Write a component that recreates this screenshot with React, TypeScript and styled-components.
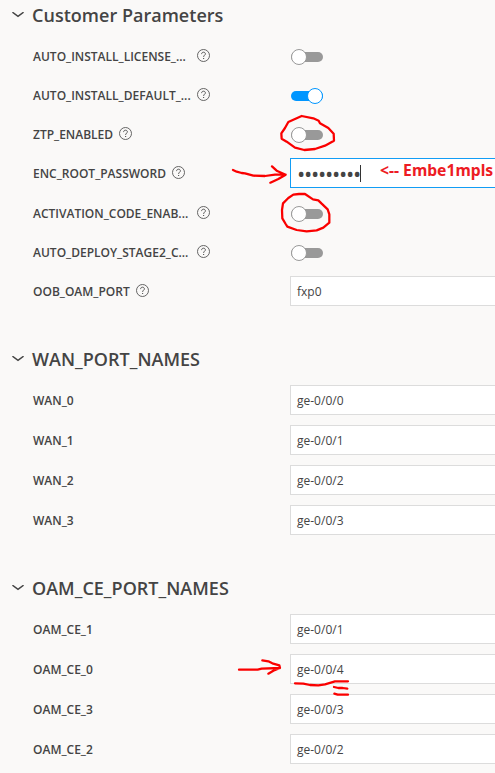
import React from "react";
import styled, { createGlobalStyle } from "styled-components";

const GlobalStyle = createGlobalStyle`
  *, *::before, *::after { box-sizing: border-box; }
  body {
    margin: 0;
    background: #faf9f8;
    color: #444;
    font-family: "Open Sans", "Noto Sans", sans-serif;
    overflow: hidden;
  }
`;

const Page = styled.main`
  position: relative;
  width: 495px;
  height: 773px;
  overflow: hidden;
  background: #faf9f8;
`;

const Section = styled.section<{ $gap: number }>`
  margin-bottom: ${(p) => p.$gap}px;
`;

const SectionHeader = styled.header<{ $height: number }>`
  display: flex;
  align-items: flex-start;
  height: ${(p) => p.$height}px;
  padding-left: 12px;
`;

const Chevron = styled.svg`
  flex: none;
  width: 12px;
  height: 6px;
  margin: 12px 8px 0 0;
`;

const Title = styled.h2`
  margin: 0;
  font-size: 18px;
  line-height: 30px;
  font-weight: 600;
  letter-spacing: 0.02px;
  white-space: nowrap;
`;

const Row = styled.div<{ $tall: boolean }>`
  display: grid;
  grid-template-columns: 257px 1fr;
  align-items: start;
  height: ${(p) => (p.$tall ? 40 : 39)}px;
  padding-left: 33px;
`;

const LabelCell = styled.div`
  display: flex;
  gap: 6px;
`;

const Label = styled.span<{ $width?: number }>`
  width: ${(p) => (p.$width ? `${p.$width}px` : "auto")};
  font-size: 12px;
  line-height: 32px;
  font-weight: 600;
  white-space: nowrap;
`;

const HelpIcon = styled.svg`
  flex: none;
  width: 13px;
  height: 13px;
  margin-top: 8px;
`;

const Field = styled.div<{ $focused?: boolean }>`
  display: flex;
  align-items: center;
  height: 30px;
  margin-right: -10px;
  padding-left: 6px;
  border: 1px solid ${(p) => (p.$focused ? "#129df5" : "#dcdcdc")};
  background: #fff;
  font-size: 12px;
  white-space: nowrap;
`;

const Dots = styled.span`
  width: 63px;
  font-size: 22px;
  line-height: 28px;
  letter-spacing: -1.27px;
`;

const Caret = styled.span`
  width: 1px;
  height: 17px;
  background: #333;
`;

const Note = styled.span`
  margin: -7px 0 0 19px;
  color: #ed1c24;
  font-family: "Noto Sans", "Open Sans", sans-serif;
  font-size: 15.7px;
  font-weight: 700;
`;

const Switch = styled.div<{ $on: boolean }>`
  display: flex;
  align-items: center;
  justify-content: ${(p) => (p.$on ? "flex-end" : "flex-start")};
  width: 32px;
  height: 10px;
  margin: 11px 0 0 1px;
  border-radius: 5px;
  background: ${(p) => (p.$on ? "#0096ff" : "#999")};
`;

const Knob = styled.span<{ $on: boolean }>`
  flex: none;
  width: 16px;
  height: 16px;
  border: 1px solid ${(p) => (p.$on ? "#0096ff" : "#999")};
  border-radius: 50%;
  background: #fff;
`;

const Markup = styled.svg`
  position: absolute;
  inset: 0;
  width: 495px;
  height: 773px;
  pointer-events: none;
`;

type Param = {
  name: string;
  help?: boolean;
  cut?: boolean;
  on?: boolean;
  value?: string;
  password?: boolean;
};

type Group = { title: string; header: number; gap: number; params: Param[] };

const groups: Group[] = [
  {
    title: "Customer Parameters",
    header: 41,
    gap: 28,
    params: [
      { name: "AUTO_INSTALL_LICENSE_...", help: true, cut: true, on: false },
      { name: "AUTO_INSTALL_DEFAULT_...", help: true, cut: true, on: true },
      { name: "ZTP_ENABLED", help: true, on: false },
      { name: "ENC_ROOT_PASSWORD", help: true, password: true, value: "•••••••••" },
      { name: "ACTIVATION_CODE_ENAB...", help: true, cut: true, on: false },
      { name: "AUTO_DEPLOY_STAGE2_C...", help: true, cut: true, on: false },
      { name: "OOB_OAM_PORT", help: true, value: "fxp0" },
    ],
  },
  {
    title: "WAN_PORT_NAMES",
    header: 41,
    gap: 28,
    params: [
      { name: "WAN_0", value: "ge-0/0/0" },
      { name: "WAN_1", value: "ge-0/0/1" },
      { name: "WAN_2", value: "ge-0/0/2" },
      { name: "WAN_3", value: "ge-0/0/3" },
    ],
  },
  {
    title: "OAM_CE_PORT_NAMES",
    header: 41,
    gap: 0,
    params: [
      { name: "OAM_CE_1", value: "ge-0/0/1" },
      { name: "OAM_CE_0", value: "ge-0/0/4" },
      { name: "OAM_CE_3", value: "ge-0/0/3" },
      { name: "OAM_CE_2", value: "ge-0/0/2" },
    ],
  },
];

function Help() {
  return (
    <HelpIcon viewBox="0 0 13 13" fill="none" stroke="#555">
      <circle cx="6.5" cy="6.5" r="6" strokeWidth="0.9" />
      <path d="M4.6 5.1C4.6 3.9 5.4 3.2 6.5 3.2S8.4 3.9 8.4 4.9C8.4 6.1 6.6 6.3 6.6 7.9" strokeWidth="1" />
      <path d="M6.6 9v1.1" strokeWidth="1.1" />
    </HelpIcon>
  );
}

function Control({ param }: { param: Param }) {
  if (param.password) {
    return (
      <Field $focused>
        <Dots>{param.value}</Dots>
        <Caret />
        <Note>&lt;-- Embe1mpls</Note>
      </Field>
    );
  }
  if (param.value !== undefined) return <Field>{param.value}</Field>;
  return (
    <Switch $on={!!param.on}>
      <Knob $on={!!param.on} />
    </Switch>
  );
}

export default function App() {
  return (
    <Page>
      <GlobalStyle />
      {groups.map((g) => (
        <Section key={g.title} $gap={g.gap}>
          <SectionHeader $height={g.header}>
            <Chevron viewBox="0 0 12 6" fill="none" stroke="#444" strokeWidth="1.5">
              <path d="M0.4 0.2L6 4.4L11.6 0.2" />
            </Chevron>
            <Title>{g.title}</Title>
          </SectionHeader>
          {g.params.map((p) => (
            <Row key={p.name} $tall={p.value !== undefined}>
              <LabelCell>
                <Label $width={p.cut ? 158 : undefined}>{p.name}</Label>
                {p.help && <Help />}
              </LabelCell>
              <Control param={p} />
            </Row>
          ))}
        </Section>
      ))}
      <Markup viewBox="0 0 495 773" fill="none" stroke="#fa0000" strokeLinecap="round" strokeLinejoin="round">
        <g transform="translate(245 30) scale(.33333)" strokeWidth="6.8">
          <path d="M170 258L205 265L221 272L225 280L250 294L266 311L267 332L240 347L210 357L178 360L150 353L125 335L110 326L109 310L120 294L130 276L150 267Z" />
        </g>
        <g transform="translate(225 150) scale(.33333)" strokeWidth="6.8">
          <path d="M240 132L264 148L280 151L290 161L308 178L313 193L313 218L295 233L275 241L245 244L215 240L187 230L182 222L172 205L171 180L174 160L190 144L205 134L222 132Z" />
          <path d="M24 60L35 65L50 69L60 70L85 77L120 78L150 74L182 74M141 49L155 62L182 74L160 87L136 98" />
        </g>
        <g transform="translate(225 600) scale(.33333)" strokeWidth="6.8">
          <path d="M42 209H98L110 206L165 204M112 181L130 184L142 190L163 196L165 204L145 212L130 221" />
          <path d="M210 250L235 251L255 255L280 256L300 253L330 244H369M327 261L340 264H353L367 266M328 281L338 284H369" />
        </g>
      </Markup>
    </Page>
  );
}
